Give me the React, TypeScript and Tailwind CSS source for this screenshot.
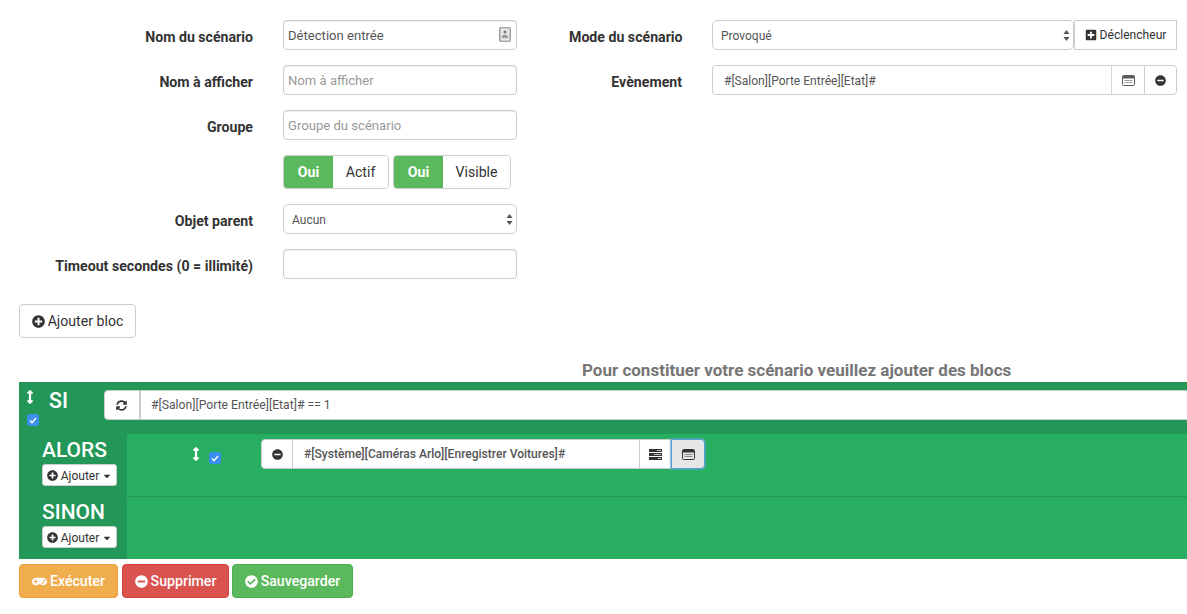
import React from 'react';
import {
  FaPlusCircle,
  FaMinusCircle,
  FaCheckCircle,
  FaPlusSquare,
  FaSyncAlt,
  FaArrowsAltV,
  FaGamepad,
  FaCaretDown,
} from 'react-icons/fa';

const inputClass =
  'h-[30px] w-full rounded border border-[#ccc] bg-white px-[4px] text-[13.1px] text-[#555] placeholder:text-[#999] shadow-[inset_0_1px_1px_rgba(0,0,0,0.075)] outline-none';
const selectClass =
  'h-[30px] w-full appearance-none rounded-[5px] border border-[#ccc] bg-white pl-2 pt-[1px] text-[12px] text-[#555] outline-none';
const sideLabel = 'w-[113px] shrink-0 whitespace-nowrap pt-[5px] text-right text-[14.15px] font-bold';

function Row({ label, children }: { label?: string; children: React.ReactNode }) {
  return (
    <div className="flex items-center">
      <label className="w-[253px] pt-[5px] text-right text-[14.15px] font-bold text-[#333]">{label}</label>
      <div className="ml-[30px] w-[234px]">{children}</div>
    </div>
  );
}

function SelectArrows() {
  return (
    <svg className="absolute right-[4px] top-[10px]" width="7" height="11" viewBox="0 0 7 11">
      <path d="M3.5 0L6.5 4H0.5z M3.5 11L0.5 7H6.5z" fill="#555" />
    </svg>
  );
}

function ListAltIcon() {
  return (
    <svg width="13" height="11" viewBox="0 0 13 11">
      <rect x="0.5" y="0.5" width="12" height="10" rx="1" fill="none" stroke="#333" />
      <rect x="1" y="1" width="11" height="2.5" fill="#333" />
      <path d="M2.5 5.5h8M2.5 7.5h8" stroke="#888" />
    </svg>
  );
}

function TasksIcon() {
  return (
    <svg width="13" height="11" viewBox="0 0 13 11">
      <rect x="0" y="0" width="13" height="3" fill="#333" />
      <rect x="0" y="4" width="13" height="3" fill="#333" />
      <rect x="0" y="8" width="13" height="3" fill="#333" />
      <path d="M8 1.5h4M5 5.5h7M9 9.5h3" stroke="#c4c4c4" />
    </svg>
  );
}

function Toggle({ label, width }: { label: string; width: string }) {
  return (
    <div className="flex h-[34px] overflow-hidden rounded border border-[#ccc] text-[14.15px]">
      <span className="flex w-[49px] items-center justify-center bg-[#5cb85c] pt-[1px] font-bold text-white">Oui</span>
      <span className={`flex items-center justify-center bg-white pt-[1px] text-[#333] ${width}`}>{label}</span>
    </div>
  );
}

function Checkbox() {
  return (
    <span className="flex h-3 w-3 items-center justify-center rounded-[3px] bg-[#3b8ff3]">
      <svg width="8" height="7" viewBox="0 0 8 7">
        <path d="M1 3.6L3 5.6L7 1" fill="none" stroke="#fff" strokeWidth="1.4" />
      </svg>
    </span>
  );
}

function AddButton() {
  return (
    <button className="flex h-[22px] w-[75px] items-center justify-center gap-[3px] rounded-[3px] border border-[#ccc] bg-white pt-[1px] text-[12px] text-[#333]">
      <FaPlusCircle className="text-[11px]" />
      Ajouter
      <FaCaretDown className="text-[10px]" />
    </button>
  );
}

export default function App() {
  return (
    <div className="h-[614px] w-[1187px] overflow-hidden bg-white font-['Roboto',sans-serif] text-[#333]">
      <div className="flex pt-5">
        <div className="flex w-[517px] flex-col gap-[15px]">
          <Row label="Nom du scénario">
            <div className="relative">
              <input className={inputClass} readOnly value="Détection entrée" />
              <svg className="absolute right-[6px] top-[7px]" width="12" height="15" viewBox="0 0 12 15">
                <rect x="0.75" y="0.75" width="10.5" height="13.5" rx="1" fill="#e6e6e6" stroke="#8a8a8a" strokeWidth="1.2" />
                <circle cx="6" cy="5" r="1.5" fill="#777" />
                <path d="M2.8 11c0-2 1.4-3.2 3.2-3.2s3.2 1.2 3.2 3.2z" fill="#999" />
              </svg>
            </div>
          </Row>
          <Row label="Nom à afficher">
            <input className={inputClass} placeholder="Nom à afficher" />
          </Row>
          <Row label="Groupe">
            <input className={inputClass} placeholder="Groupe du scénario" />
          </Row>
          <Row>
            <div className="flex gap-1">
              <Toggle label="Actif" width="w-[55px]" />
              <Toggle label="Visible" width="w-[67px]" />
            </div>
          </Row>
          <Row label="Objet parent">
            <div className="relative">
              <select className={selectClass} defaultValue="Aucun">
                <option>Aucun</option>
              </select>
              <SelectArrows />
            </div>
          </Row>
          <Row label="Timeout secondes (0 = illimité)">
            <input className={inputClass} />
          </Row>
        </div>

        <div className="ml-[52px] flex w-[608px] flex-col gap-[15px]">
          <div className="flex items-center">
            <label className={sideLabel}>Mode du scénario</label>
            <div className="relative ml-[30px] w-[362px]">
              <select className={selectClass} defaultValue="Provoqué">
                <option>Provoqué</option>
              </select>
              <SelectArrows />
            </div>
            <button className="flex h-[30px] w-[103px] items-center justify-center gap-[3px] border border-[#ccc] bg-white text-[12.1px] text-[#333]">
              <FaPlusSquare className="text-[12px]" />
              Déclencheur
            </button>
          </div>
          <div className="flex items-center">
            <label className={sideLabel}>Evènement</label>
            <div className="ml-[30px] flex h-[30px] w-[465px] rounded border border-[#ccc] text-[#333]">
              <span className="flex flex-1 items-center px-[11px] pt-[2px] text-[12.05px] text-[#555]">#[Salon][Porte Entrée][Etat]#</span>
              <span className="flex w-[33px] items-center justify-center border-l border-[#ccc] opacity-80">
                <ListAltIcon />
              </span>
              <span className="flex w-[32px] items-center justify-center border-l border-[#ccc] text-[11px]">
                <FaMinusCircle />
              </span>
            </div>
          </div>
        </div>
      </div>

      <button className="ml-[19px] mt-[25px] flex h-[34px] w-[117px] items-center justify-center gap-[3px] rounded border border-[#ccc] bg-white pt-[1px] text-[14.15px] text-[#333]">
        <FaPlusCircle className="text-[13px]" />
        Ajouter bloc
      </button>

      <h3 className="ml-[582px] mt-[21px] h-[23px] text-[17px] font-bold leading-[22px] text-[#767676]">
        Pour constituer votre scénario veuillez ajouter des blocs
      </h3>

      <div className="ml-[19px] flex h-[177px] flex-col bg-[#229758]">
        <div className="flex h-[52px] shrink-0">
          <div className="flex w-[30px] flex-col items-start pl-[8px] pt-[8px] text-white">
            <FaArrowsAltV className="-ml-[4px] text-[14px]" />
            <span className="mt-[10px]"><Checkbox /></span>
          </div>
          <span className="pt-[3px] text-[21.3px] font-medium text-white">SI</span>
          <div className="ml-[36px] mt-[8px] flex h-[30px] flex-1">
            <span className="flex w-[36px] items-center justify-center rounded-l border border-[#ccc] bg-white text-[11px] text-[#333]">
              <FaSyncAlt />
            </span>
            <span className="flex flex-1 items-center border border-r-0 border-[#ccc] bg-white pl-[10px] pt-[1px] text-[12.2px] text-[#555]">
              #[Salon][Porte Entrée][Etat]# == 1
            </span>
          </div>
        </div>

        <div className="flex flex-1">
          <div className="w-[108px] shrink-0">
            <div className="flex h-[62px] flex-col pl-[23px]">
              <span className="pt-[2px] text-[21px] font-medium leading-[28px] text-white">ALORS</span>
              <AddButton />
            </div>
            <div className="flex h-[63px] flex-col pl-[23px]">
              <span className="pt-[2px] text-[21px] font-medium leading-[28px] text-white">SINON</span>
              <AddButton />
            </div>
          </div>
          <div className="flex flex-1 flex-col bg-[#27ae60]">
            <div className="flex h-[63px] border-b border-[#229758] pt-[5px]">
              <div className="flex w-[134px] items-start pt-[8px]">
                <FaArrowsAltV className="ml-[62px] text-[14px] text-white" />
                <span className="ml-[6px] mt-[5px]"><Checkbox /></span>
              </div>
              <div className="flex h-[30px]">
                <span className="flex w-[32px] items-center justify-center rounded-l border border-[#ccc] bg-white text-[11px] text-[#333]">
                  <FaMinusCircle />
                </span>
                <span className="flex w-[346px] items-center border-y border-[#ccc] bg-white pl-[11px] text-[12.05px] font-medium text-[#555]">
                  #[Système][Caméras Arlo][Enregistrer Voitures]#
                </span>
                <span className="flex w-[32px] items-center justify-center border border-[#ccc] bg-white">
                  <TasksIcon />
                </span>
                <span className="flex w-[34px] items-center justify-center rounded-r border border-[#5b9ad9] bg-[#e6e6e6] shadow-[0_0_3px_#66afe9]">
                  <ListAltIcon />
                </span>
              </div>
            </div>
            <div className="flex-1" />
          </div>
        </div>
      </div>

      <div className="ml-[19px] mt-[5px] flex gap-1 text-[14.15px] font-medium text-white">
        <button className="flex h-[34px] w-[99px] items-center justify-center gap-[3px] rounded border border-[#eea236] bg-[#f0ad4e] pt-[1px]">
          <FaGamepad className="text-[15px]" />
          Exécuter
        </button>
        <button className="flex h-[34px] w-[107px] items-center justify-center gap-[3px] rounded border border-[#d43f3a] bg-[#d9534f] pt-[1px]">
          <FaMinusCircle className="text-[13px]" />
          Supprimer
        </button>
        <button className="-ml-px flex h-[34px] w-[121px] items-center justify-center gap-[3px] rounded border border-[#4cae4c] bg-[#5cb85c] pt-[1px]">
          <FaCheckCircle className="text-[13px]" />
          Sauvegarder
        </button>
      </div>
    </div>
  );
}
